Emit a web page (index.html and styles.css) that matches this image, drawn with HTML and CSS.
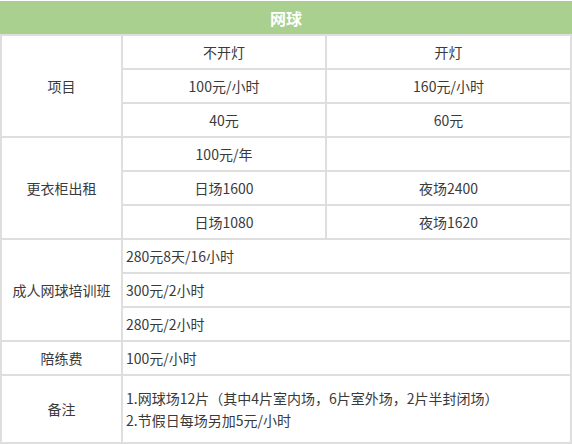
FILE: index.html
```html
<!DOCTYPE html>
<html lang="zh-CN">
<head>
<meta charset="utf-8">
<title>网球</title>
<link rel="stylesheet" href="styles.css">
</head>
<body>
<div class="page">
  <div class="title">网球</div>
  <div class="grid">
    <div class="cell label r3">项目</div>
    <div class="cell">不开灯</div>
    <div class="cell">开灯</div>
    <div class="cell">100元/小时</div>
    <div class="cell">160元/小时</div>
    <div class="cell">40元</div>
    <div class="cell">60元</div>

    <div class="cell label r3">更衣柜出租</div>
    <div class="cell">100元/年</div>
    <div class="cell"></div>
    <div class="cell">日场1600</div>
    <div class="cell">夜场2400</div>
    <div class="cell">日场1080</div>
    <div class="cell">夜场1620</div>

    <div class="cell label r3">成人网球培训班</div>
    <div class="cell wide">280元8天/16小时</div>
    <div class="cell wide">300元/2小时</div>
    <div class="cell wide">280元/2小时</div>

    <div class="cell label">陪练费</div>
    <div class="cell wide">100元/小时</div>

    <div class="cell label r2">备注</div>
    <div class="cell wide r2 notes">
      <div>1.网球场12片（其中4片室内场，6片室外场，2片半封闭场）</div>
      <div>2.节假日每场另加5元/小时</div>
    </div>
  </div>
</div>
</body>
</html>
```

FILE: styles.css
```css
html, body {
  margin: 0;
  padding: 0;
  background: #ffffff;
}

.page {
  width: 572px;
  padding-top: 1px;
  font-family: "Noto Sans CJK SC", "Noto Sans", sans-serif;
  font-size: 14px;
  color: #3a3a3a;
}

.title {
  height: 33px;
  background: #a9d08e;
  color: #ffffff;
  font-weight: bold;
  font-size: 16px;
  display: flex;
  align-items: center;
  justify-content: center;
}

.grid {
  display: grid;
  grid-template-columns: 119px 202px 243px;
  grid-auto-rows: 32px;
  gap: 2px;
  padding: 2px;
  background: #dedede;
}

.cell {
  background: #ffffff;
  display: flex;
  align-items: center;
  justify-content: center;
  line-height: 22px;
  white-space: nowrap;
}

.r3 {
  grid-row: span 3;
}

.r2 {
  grid-row: span 2;
}

.wide {
  grid-column: span 2;
  justify-content: flex-start;
  padding-left: 3px;
}

.notes {
  flex-direction: column;
  align-items: flex-start;
  justify-content: center;
}
```
